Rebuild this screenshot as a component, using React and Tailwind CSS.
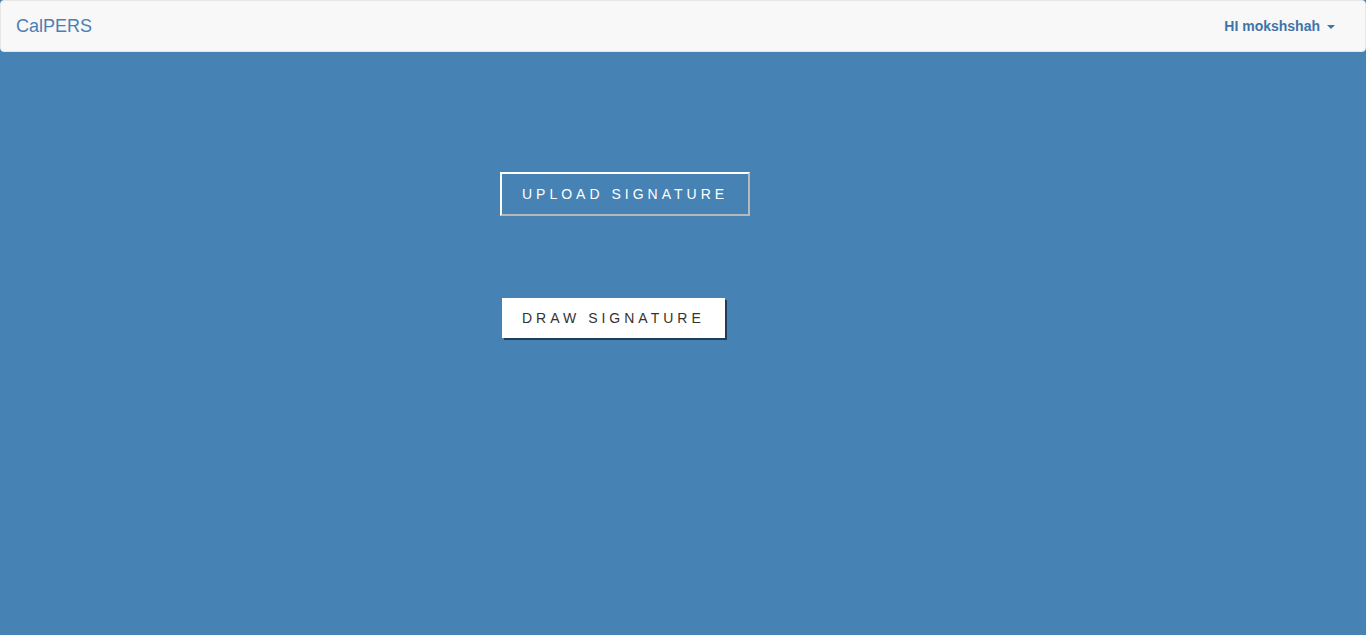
import React from 'react';

const App = () => {
  return (
    <div className="min-h-[635px] bg-[#4682b4] font-['Liberation_Sans',Arial,sans-serif]">
      {/* navbar */}
      <nav className="h-[52px] bg-[#f8f8f8] border border-[#e7e7e7] rounded flex items-center justify-between">
        <span className="pl-[15px] text-[18px] leading-5 text-[#4a80b3]">CalPERS</span>
        <div className="pr-[30px] flex items-center text-sm font-bold text-[#3f74a8]">
          HI mokshshah
          <span className="ml-[7px] mt-[1px] w-0 h-0 border-l-4 border-r-4 border-t-4 border-l-transparent border-r-transparent border-t-[#3f74a8]" />
        </div>
      </nav>

      <div className="pl-[500px] pt-[120px] flex flex-col items-start">
        <button className="px-5 py-2.5 text-sm leading-5 tracking-[4px] text-white border-2 border-t-white border-l-white border-r-[#b8b8b8] border-b-[#b8b8b8]">
          UPLOAD SIGNATURE
        </button>
        <button className="mt-[82px] ml-[2px] px-5 py-2.5 text-sm leading-5 tracking-[4px] text-[#333] bg-white shadow-[2px_2px_0_#1f3c5a]">
          DRAW SIGNATURE
        </button>
      </div>
    </div>
  );
};

export default App;
